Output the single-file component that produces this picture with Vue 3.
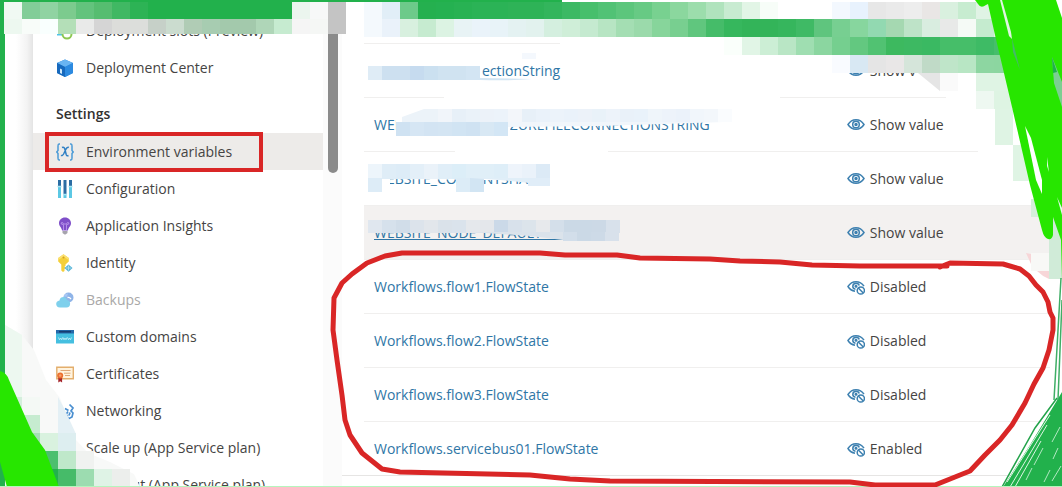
<script setup>
const menuTop = [
  { icon: 'slots', label: 'Deployment slots (Preview)' },
  { icon: 'cube', label: 'Deployment Center' },
]

const menuSettings = [
  { icon: 'vars', label: 'Environment variables', active: true },
  { icon: 'config', label: 'Configuration' },
  { icon: 'bulb', label: 'Application Insights' },
  { icon: 'key', label: 'Identity' },
  { icon: 'cloud', label: 'Backups', dim: true },
  { icon: 'www', label: 'Custom domains' },
  { icon: 'cert', label: 'Certificates' },
  { icon: 'net', label: 'Networking' },
  { icon: 'none', label: 'Scale up (App Service plan)' },
  { icon: 'none', label: 'Scale out (App Service plan)' },
]

const rows = [
  { name: 'ectionString', value: 'Show value', tail: true },
  { name: 'WEBSITE_CONTENTAZUREFILECONNECTIONSTRING', value: 'Show value' },
  { name: 'WEBSITE_CONTENTSHARE', value: 'Show value' },
  { name: 'WEBSITE_NODE_DEFAULT_VERSION', value: 'Show value', hover: true },
  { name: 'Workflows.flow1.FlowState', value: 'Disabled', off: true },
  { name: 'Workflows.flow2.FlowState', value: 'Disabled', off: true },
  { name: 'Workflows.flow3.FlowState', value: 'Disabled', off: true },
  { name: 'Workflows.servicebus01.FlowState', value: 'Enabled', off: true },
]

// Each strip is a run of equal cells: origin, cell width, height, colours.
const strips = [
  { x: 4, y: 2, w: 18, h: 17, c: 'f0f9f3 82cd98 90d3a2 7ccb8e 63c37d 56bd70 40b863 2db355 22b14c 22b14c 22b14c 22b14c 22b14c 22b14c 22b14c 22b14c ebf5ee f7f8f8 c4c4c4' },
  { x: 4, y: 19, w: 18, h: 15, c: 'edf8f0 f8fcf9 f9fffe b4dfb8 e9eae9 d5d5d5 dcddda dcdedb c6d0c8 cbdccf b0ccb5 a7ccb1 a3c9ac a3c9ac afd6b8 c6ebd0 f5f5f5 f5f7f5 c4c4c4' },
  { x: 364, y: 2, w: 18, h: 17, c: 'f4f9fd e1eef7 6dca8a 25b04f 25b151 28b253 2bb356 2bb356 2eb357 2eb357 33b55c 3cb964 47bf6c 51c275 5cc67c 67ca84 78d190 8bd79e 9cddac b0e3bd c8ebd1 e2f5e6 f7fdf8' },
  { x: 364, y: 19, w: 18, h: 18, c: 'f4f9fd eaf2fa d8f0df c6ebd0 dcf3e3 e8f3f5 eaf3fa e8f3f8 e4f2f2 e2f2ee d4efdf cfeed8 c5ead0 b7e5c3 a4deb3 9bdaab 87d59b 78cf90 60c67e 45bc69 36b75d 33b459 33b459 36b65d 3fba65 5fc57e 77cf91 87d69e 92d9b1 a5d8b1 bee3c8 d9ede0 e8e9e8 f5faf6 c5ebcf dff4e4' },
  { x: 832, y: 2, w: 18, h: 17, c: 'f3f8fe e8f2fd e7e7e7 eaeaea ededed e9e6e5 d9f0df c7ecd0 e0f3e5' },
  { x: 724, y: 37, w: 18, h: 18, c: 'fafffb e1f5e6 cceed5 b9e6c5 9fdeb1 8bd6a0 75cf8f 63c880 51c272 3db95f 3db962 3ab962 46be69 46be69 3ebb65 46be6b 46be6b' },
  { x: 832, y: 55, w: 18, h: 18, c: 'f9fbff d8e8f3 e5e5e5 e9e7e7 d5e5da c0dac7 bfe5c9 b8e6c4 8dd6a1 8cd6a0' },
  { x: 940, y: 73, w: 18, h: 18, c: 'fafafa ffffff dff4e4 dff4e4' },
  { x: 976, y: 91, w: 18, h: 18, c: 'eef8f1 def4e3' },
  { x: 995, y: 109, w: 18, h: 36, c: 'dff4e4' },
  { x: 1013, y: 145, w: 18, h: 36, c: 'dff4e4' },
  { x: 1031, y: 199, w: 14, h: 18, c: 'd5efdb' },
  { x: 1031, y: 253, w: 18, h: 18, c: 'f8f8f6' },
  { x: 1049, y: 217, w: 13, h: 62, c: 'd0ebd8' },
  { x: 368, y: 66, w: 14, h: 14, c: 'dfecf6 cde0f0 cde0f0 c6dbef cbe0f0 d0e3f1 d0e3f1 d3e5f3' },
  { x: 522, y: 53, w: 14, h: 6, c: 'f4f8fd' },
  { x: 424, y: 109, w: 14, h: 13, c: 'ecf3f9 f1f5fa e7f0f8 eaf2f9 ecf2f9 ecf3fa f3f6fa e7f0f8 eaf2fa ecf3fa eaf2fa ecf2f9 e9f2f9 edf3fa e9f1f9 e9f2fa eff5fa edf3fa ebf2fa f1f6fb f3f7fb fafcfe' },
  { x: 396, y: 122, w: 14, h: 14, c: 'cfe2f2 d6e6f4 d3e4f3 d4e5f3 d1e4f3 cfe2f2 d8e8f4 d3e6f5' },
  { x: 368, y: 164, w: 14, h: 15, c: 'edf5fb dfedf7 ddecf7 e3eff8 eaf2f9 e0eef8 dceef8 e0eff8 e0eff8 deeef8 eef4fb eaf2fa dceaf6' },
  { x: 368, y: 178, w: 14, h: 14, c: 'ddecf7' },
  { x: 456, y: 178, w: 14, h: 14, c: 'dcecf7 d2e5f3' },
  { x: 368, y: 220, w: 14, h: 13, c: 'e0e7ef d6e1ec d1dde9 dce3eb e2e6eb dae2ea dae3ec e5e8ec e4e7eb cbd9e8 d8e1eb dce4eb e7e9ec d4dfea cbd9e6 cbd9e6 ccd9e6 d8e1eb' },
  { x: 563, y: 232, w: 14, h: 9, c: 'd2deea cbd9e6 cddae7 d8e1eb' },
  { x: 4, y: 397, w: 18, h: 18, c: 'd4efdc f4f9f5' },
  { x: 4, y: 415, w: 18, h: 18, c: 'c6ecd0 c6ecd0' },
  { x: 22, y: 433, w: 18, h: 54, c: 'a4deb4' },
  { x: 40, y: 433, w: 18, h: 18, c: 'd9f2df ddeef0' },
  { x: 40, y: 451, w: 18, h: 18, c: '4cbf6e bfe8ca f0f2f0' },
  { x: 40, y: 469, w: 18, h: 18, c: '22b14c 46bb69 9cdcb0 dff3e6 eceeec' },
]

const toCells = (list) =>
  list.flatMap((s) =>
    s.c.split(' ').map((fill, i) => ({ x: s.x + i * s.w, y: s.y, w: s.w, h: s.h, fill: '#' + fill })),
  )
const cells = toCells(strips)
</script>

<template>
  <div class="page">
    <nav class="side" aria-label="App menu">
      <ul class="menu">
        <li v-for="m in menuTop" :key="m.label">
          <a href="#" class="item">
            <svg v-if="m.icon === 'slots'" class="icon" viewBox="0 0 18 18">
              <path d="M1 12h9" stroke="#4fc3e8" stroke-width="3" />
              <circle cx="11" cy="12" r="4.500" fill="#fff" stroke="#8cc751" stroke-width="2" />
            </svg>
            <svg v-else class="icon" viewBox="0 0 18 18">
              <path d="M9 .5 17 4v10l-8 4-8-4V4z" fill="#1f7fd6" />
              <path d="M9 .5 17 4 9 8 1 4z" fill="#69b4f2" />
              <path d="M9 8l8-4v10l-8 4z" fill="#2c8ae0" />
              <path d="M1 4l8 4v10l-8-4z" fill="#1769bd" />
              <path d="M4 9.500l2 1v4.500l-2-1z" fill="#cfe9fb" />
            </svg>
            <span>{{ m.label }}</span>
          </a>
        </li>
      </ul>
      <h2 class="heading">Settings</h2>
      <ul class="menu">
        <li v-for="m in menuSettings" :key="m.label">
          <a href="#" class="item" :class="{ active: m.active, dim: m.dim }">
            <svg v-if="m.icon === 'vars'" class="icon" viewBox="0 0 18 18" fill="none" stroke="#2f7fc4">
              <path d="M4 1H3Q2 1 2 3v4.500L.8 9 2 10.500V15q0 2 1 2h1M14 1h1q1 0 1 2v4.500L17.200 9 16 10.500V15q0 2-1 2h-1" stroke="#4a9ad6" stroke-width="1.500" />
              <path d="M6 4.500q2-1 2.800 1.500l1.400 5.500q.6 2 2.300 1M12.800 4.500q-1.600-.8-3 2L7.600 11q-1.200 2.200-2.600 1.300" stroke-width="1.500" />
            </svg>
            <svg v-else-if="m.icon === 'config'" class="icon" viewBox="0 0 18 18">
              <path d="M3.500 7v11M9 15v3M14.500 7v11" stroke="#5cc8e4" stroke-width="3" />
              <path d="M3.500 0v6M9 0v14M14.500 0v6" stroke="#2b6da3" stroke-width="3" />
              <path d="M1.500 6.500h4M7 14.500h4M12.500 6.500h4" stroke="#a9e3f2" stroke-width="1.500" />
            </svg>
            <svg v-else-if="m.icon === 'bulb'" class="icon" viewBox="0 0 18 18">
              <path d="M9 .5c3.500 0 6 2.500 6 5.800 0 3-2.600 4-3 7.200H6c-.4-3.200-3-4.200-3-7.200C3 3 5.500.5 9 .5z" fill="#7f4fc9" />
              <path d="M7.500 13V7.500q-2.500.3-2.500-1.500 2-1.500 2.500 1h3q.5-2.500 2.500-1 0 1.800-2.500 1.500V13" fill="none" stroke="#b48fe8" />
              <path d="M6.500 14h5v2L9.500 17.500h-1L6.500 16z" fill="#a6a3ad" />
            </svg>
            <svg v-else-if="m.icon === 'key'" class="icon" viewBox="0 0 18 18">
              <path d="M7.500.3 12.800 4v3.500L9.500 10.500v1.200l-1 1 1 1.200-1 1.200V17l-1.500 1-1.700-1.500v-6L2.200 7.500V4z" fill="#f4cf3a" />
              <path d="M7.500.3 12.800 4v2L7.500 2.800 2.200 6V4z" fill="#fbe172" />
              <circle cx="7.500" cy="3.500" r="1" fill="#d3a01f" />
              <path d="M12.500 10.500 16.500 14l-4 3.700-4-3.700z" fill="#58b5d8" />
              <path d="M12.500 11.500v5M10 14h5" stroke="#b9e2f0" stroke-width=".8" />
            </svg>
            <svg v-else-if="m.icon === 'cloud'" class="icon" viewBox="0 0 18 18">
              <circle cx="12.500" cy="6.500" r="5" fill="#8fb4e8" />
              <path d="M4 16.500c-5 0-5-6.500-.5-7C4 5 10.500 5 11 9c4.500.5 4 7.500-.5 7.500z" fill="#7fd0ec" />
              <path d="M7.500 5.500q1-3 4.500-3l-1.200 3.200" fill="#a8c8f4" />
              <path d="M11.500 6.500q2-.5 3.500 1.500" fill="none" stroke="#fff" stroke-width="1.300" />
            </svg>
            <svg v-else-if="m.icon === 'www'" class="icon" viewBox="0 0 18 18">
              <path d="M0 2h18v13.500H0z" fill="#45bfe0" />
              <path d="M0 2h18v3.500H0z" fill="#2468a8" />
              <path d="M3 3.700h12" stroke="#173d70" stroke-width="1.600" />
              <path d="m2.500 9.500 1 2.300L4.700 10l1 1.800 1-2.300M7 9.500l1 2.300L9 10l1 1.800 1-2.300M11.500 9.500l1 2.300 1-1.800 1 1.800 1-2.300" fill="none" stroke="#c9f2fb" stroke-width=".8" />
            </svg>
            <svg v-else-if="m.icon === 'cert'" class="icon" viewBox="0 0 18 18">
              <path d="M.8 2.200h16.500v11.600H.8z" fill="#fff3de" stroke="#e3ae6c" stroke-width="1.400" />
              <path d="M4.500 5.500h10M8 8.200h6.500M9 10.500h5" stroke="#e0a878" />
              <path d="M2.300 11.500v6l1.900-1.300 1.900 1.300v-6z" fill="#a5252b" />
              <circle cx="4.200" cy="10.500" r="3" fill="#ec6f2f" />
              <circle cx="4.200" cy="10.500" r="1.300" fill="#f6a06a" />
            </svg>
            <svg v-else-if="m.icon === 'net'" class="icon" viewBox="0 0 18 18" fill="none" stroke="#4a8fd0" stroke-width="1.700">
              <path d="M9 6.500 12.500 8.500M13.500 2.500 17 6l-2 3 2 2-1 4-3 1.500-3-1.500M12 9.500l-2 3 2 2M14 10.500l-1 3" />
            </svg>
            <span v-else class="icon"></span>
            <span>{{ m.label }}</span>
          </a>
        </li>
      </ul>
    </nav>

    <div class="rail"><div class="thumb"></div></div>

    <main class="main">
      <table class="grid">
        <tbody>
          <tr v-for="r in rows" :key="r.name" :class="{ hover: r.hover }">
            <td class="name">
              <a href="#" :class="{ tail: r.tail }">{{ r.name }}</a>
            </td>
            <td>
              <button type="button" class="value">
                <svg v-if="r.off" class="eye" viewBox="0 0 18 16" fill="none" stroke="#3d80b0" stroke-width="1.500">
                  <path d="M8 12.200Q3.500 11.500 1 7.500 4 2.700 9 2.700q5 0 8 4.500" />
                  <path d="M8.500 10.200Q5.800 9.800 5.800 7.200 6 4.500 9 4.300q2.700.1 3.200 2.200" />
                  <circle cx="9" cy="7.200" r=".8" fill="#3d80b0" />
                  <circle cx="13.800" cy="11.500" r="3.600" fill="#fff" />
                  <path d="m11.300 9 5 5" />
                </svg>
                <svg v-else class="eye" viewBox="0 0 18 16" fill="none" stroke="#3d80b0" stroke-width="1.500">
                  <path d="M1 7.500Q4 2.700 9 2.700t8 4.800q-3 4.800-8 4.800T1 7.500z" />
                  <circle cx="9" cy="7.500" r="3.300" />
                  <circle cx="9" cy="7.500" r="1" fill="#3d80b0" />
                </svg>
                <span>{{ r.value }}</span>
              </button>
            </td>
          </tr>
        </tbody>
      </table>
      <div class="foot"></div>
    </main>

    <svg class="marks" viewBox="0 0 1062 487" preserveAspectRatio="none" aria-hidden="true">
      <!-- erased patches -->
      <g fill="#fff">
        <path d="M346 0H1062V42H364V44H346zM560 40H1062V46H560z" />
        <path d="M364 45H481V84H364z" />
        <path d="M844 50H1000V73H860L850 71H844z" />
        <path d="M916 72H960V92H950L916 76z" />
        <path d="M444 95H780V100H444zM946 95H1050V100H946zM455 149H608V154H455zM978 149H1050V154H978z" />
        <path d="M396 117Q412 110 450 108H732V121L510 124V132L575 136H396z" />
        <path d="M366 162H552V178L500 180 390 179V194H366zM456 176H484V194H456zM528 178H556V190H528z" />
      </g>
      <path d="M5 325 22 335 34 350 46 380 60 398 76 440 88 453 110 462 134 474 140 487H0V325z" fill="#f8f9f8" />
      <path d="M5 325 22 335V487H5z" fill="#edf8f0" />
      <path d="M58 397 64 408 76 434V451H58z" fill="#e4f0f5" />
      <path d="M918 73H940V91z" fill="#e5e5e5" />
      <path d="M0 0H562V2H0zM0 0H5V487H0z" fill="#22b14c" />
      <rect v-for="(c, i) in cells" :key="i" :x="c.x" :y="c.y" :width="c.w" :height="c.h" :fill="c.fill" />
      <path d="M402 122V117L424 109V122z" fill="#ecf3f9" />
      <path d="M508 122H724L600 126 508 127z" fill="#f1f6fb" />
      <path d="M470 178H549V185L500 180z" fill="#e0eef8" />
      <path d="M528 178H550V186H528z" fill="#e0edf8" />
      <path d="M480 80V78L532 79Q510 81 480 80z" fill="#d3e5f3" />
      <path d="M470 232H563V240L530 236z" fill="#dbe3eb" />
      <path d="M1026 253 1031 254V264zM1037 271H1049V279Q1042 276 1037 271z" fill="#f7d6d8" />

      <!-- dark green scribble -->
      <path d="M1062 392 1053 407 1030 445 1003 487H1062z" fill="#22b14c" />
      <path d="M1061 278 1054 400M1062 300 1058 400" fill="none" stroke="#3fae66" stroke-width="1.500" />
      <path d="M1057 398 1035 428 1002 487" fill="none" stroke="#22a34a" stroke-width="1.500" />
      <path d="M1050 415 1007 482M1047 425 1010 487M1041 441 1015 487" fill="none" stroke="#dcf5e3" />
      <path d="M1060 427 1052 442M1058 448 1053 459M1043 448 1034 465M1032 468 1026 480M1061 466 1052 481M1050 470 1044 482" stroke="#b2e8c2" />

      <!-- bright green scribble -->
      <path d="M978 0H1056L1062 18V280L1061 240 1053 217V235Q1052 240 1048 239 1044 238 1042 230L1030 185 1012 107 995 35 988 4 986 5Q981 9 978 4L975 0z" fill="#27e600" />
      <path d="M1000 0 1002 0 1011 32 1012 39 1009 36z" fill="#dff5e0" />
      <path d="M1012 38 1020 70 1013 52z" fill="#45b969" />
      <path d="M1025 126 1031 138 1042 180V194L1036 180z" fill="#fff" />
      <path d="M1047 157 1049 172 1047 166zM1057 197 1062 208V215z" fill="#e5faec" />
      <path d="M1052 57 1062 82V107L1054 83z" fill="#7ccf91" />
      <path d="M1052 57 1057 72 1053 73z" fill="#1fb14a" />
      <path d="M0 371Q7 373 9 380L32 432 45 450 59 487H7L0 462z" fill="#27e600" />
      <path d="M0 486H1062V487H0z" fill="#b5f5bd" />

      <!-- red annotations -->
      <g fill="none" stroke="#d92626">
        <path d="M47 134H261V170H47z" stroke-width="4" />
        <path
          d="M947 266 860 266 812 265 780 262 740 261 710 259 640 258 617 255 565 255 540 253 402 253 385 256 367 263 352 274 342 283 334 298 333 330 337 360 342 395 345 420 350 435 362 453 382 469 400 472 530 475 570 479 610 481 850 482 875 485 935 485 955 477 970 471 985 455 1000 440 1012 425 1025 403 1034 384 1043 368 1049 350 1053 330 1053 318 1050 312 1048 302 1043 292 1036 285 1029 276 1020 269 1003 264 950 263 940 267"
          stroke-width="5"
          stroke-linejoin="round"
          stroke-linecap="round"
        />
      </g>
    </svg>
  </div>
</template>

<style>
body {
  margin: 0;
  background: #fff;
}
</style>

<style scoped>
.page {
  position: relative;
  display: grid;
  grid-template-columns: 290px 19px 1fr;
  height: 100vh;
  padding-left: 33px;
  overflow: hidden;
  box-sizing: border-box;
  background: linear-gradient(90deg, #fff 16px, #f3f3f3 27px, #e4e4e4 33px, #fff 34px);
  font-family: 'Open Sans', 'Noto Sans', sans-serif;
  font-size: 14px;
  line-height: 20px;
  color: #454443;
}
.side {
  min-width: 0;
  padding-top: 12px;
  background: #fff;
}
.menu {
  margin: 0;
  padding: 0;
  list-style: none;
}
.item {
  display: flex;
  align-items: center;
  gap: 12px;
  height: 37px;
  padding-left: 23px;
  color: inherit;
  text-decoration: none;
  white-space: nowrap;
}
.item.active {
  background: #edebe9;
}
.item.dim {
  color: #a9a8a7;
}
.icon {
  flex: none;
  width: 18px;
  height: 18px;
}
.heading {
  margin: 0;
  padding: 18px 23px 9px;
  font-size: 14px;
  line-height: 20px;
  font-weight: 600;
  color: #323130;
}
.rail {
  background: #fbfbfb;
}
.thumb {
  width: 10px;
  height: 173px;
  margin-left: 5px;
  border-radius: 0 0 5px 5px;
  background: #8b8b8b;
}
.main {
  min-width: 0;
  padding: 43px 12px 0 22px;
}
.grid {
  width: 100%;
  border-collapse: collapse;
  border-top: 1px solid #f0efee;
  table-layout: fixed;
}
.grid td {
  height: 53px;
  padding: 0 10px;
  border-bottom: 1px solid #f0efee;
  vertical-align: middle;
}
.grid tr:last-child td {
  border-bottom: 0;
}
.grid .name {
  width: 66%;
}
.hover td {
  background: #f3f1f0;
}
.name a {
  color: #2f76a6;
  text-decoration: none;
}
.name .tail {
  padding-left: 108px;
}
.hover a {
  text-decoration: underline;
}
.value {
  display: flex;
  align-items: center;
  gap: 5px;
  padding: 0;
  border: 0;
  background: none;
  font: inherit;
  color: inherit;
  white-space: nowrap;
}
.eye {
  width: 18px;
  height: 16px;
}
.foot {
  margin: 0 -12px 0 -22px;
  border-top: 1px solid #e6e5e4;
}
.marks {
  position: absolute;
  inset: 0;
  width: 100%;
  height: 100%;
  pointer-events: none;
}
</style>
